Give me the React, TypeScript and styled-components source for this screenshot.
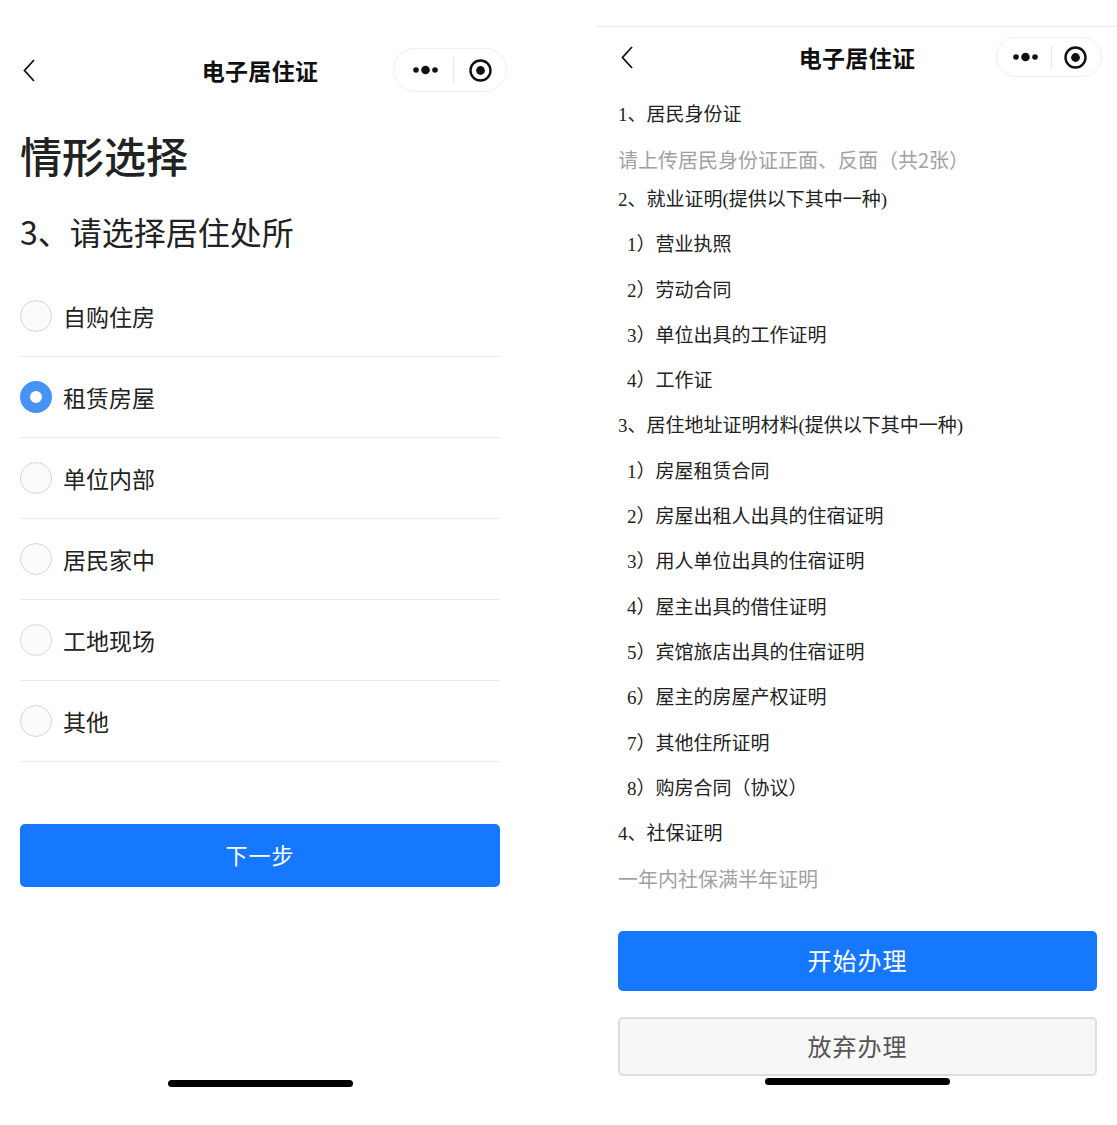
import React from 'react';
import styled, { createGlobalStyle } from 'styled-components';

const SANS = '"Noto Sans CJK SC", "Noto Sans", sans-serif';
const SERIF = '"Liberation Serif", "Noto Sans CJK SC", serif';

const GlobalStyle = createGlobalStyle`
  html, body {
    margin: 0;
    padding: 0;
    background: #fff;
  }
  body {
    font-family: ${SANS};
    color: #222;
  }
  * {
    box-sizing: border-box;
  }
`;

const options = ['自购住房', '租赁房屋', '单位内部', '居民家中', '工地现场', '其他'];

type Line = { kind: 'head' | 'item' | 'note'; text: string };

const docs: Line[] = [
  { kind: 'head', text: '1、居民身份证' },
  { kind: 'note', text: '请上传居民身份证正面、反面（共2张）' },
  { kind: 'head', text: '2、就业证明(提供以下其中一种)' },
  { kind: 'item', text: '1）营业执照' },
  { kind: 'item', text: '2）劳动合同' },
  { kind: 'item', text: '3）单位出具的工作证明' },
  { kind: 'item', text: '4）工作证' },
  { kind: 'head', text: '3、居住地址证明材料(提供以下其中一种)' },
  { kind: 'item', text: '1）房屋租赁合同' },
  { kind: 'item', text: '2）房屋出租人出具的住宿证明' },
  { kind: 'item', text: '3）用人单位出具的住宿证明' },
  { kind: 'item', text: '4）屋主出具的借住证明' },
  { kind: 'item', text: '5）宾馆旅店出具的住宿证明' },
  { kind: 'item', text: '6）屋主的房屋产权证明' },
  { kind: 'item', text: '7）其他住所证明' },
  { kind: 'item', text: '8）购房合同（协议）' },
  { kind: 'head', text: '4、社保证明' },
  { kind: 'note', text: '一年内社保满半年证明' },
];

type NavProps = {
  top?: boolean;
  capsuleWidth: number;
  capsuleHeight: number;
};

const NavHeader = ({ top, capsuleWidth, capsuleHeight }: NavProps) => (
  <NavBar $top={top}>
    <BackButton>
      <svg width="12" height="23" viewBox="0 0 12 23">
        <polyline points="11,1 1.5,11.5 11,22" fill="none" stroke="#111" strokeWidth="1.8" />
      </svg>
    </BackButton>
    <NavTitle>电子居住证</NavTitle>
    <Capsule $w={capsuleWidth} $h={capsuleHeight}>
      <svg width="25" height="10" viewBox="0 0 25 10">
        <circle cx="3" cy="5" r="2.8" fill="#111" />
        <circle cx="12.5" cy="5" r="4.3" fill="#111" />
        <circle cx="22" cy="5" r="2.8" fill="#111" />
      </svg>
      <CapsuleDivider />
      <svg width="23" height="23" viewBox="0 0 23 23">
        <circle cx="11.5" cy="11.5" r="10" fill="none" stroke="#111" strokeWidth="2.4" />
        <circle cx="11.5" cy="11.5" r="4.4" fill="#111" />
      </svg>
    </Capsule>
  </NavBar>
);

const App = () => {
  const selected = 1;
  return (
    <Page>
      <GlobalStyle />
      <Screen $left>
        <NavHeader capsuleWidth={114} capsuleHeight={44} />
        <LeftBody>
          <PageTitle>情形选择</PageTitle>
          <Question>3、请选择居住处所</Question>
          <OptionList>
            {options.map((o, i) => (
              <OptionRow key={o}>
                <Radio $checked={i === selected} />
                <OptionText>{o}</OptionText>
              </OptionRow>
            ))}
          </OptionList>
          <PrimaryButton $h={63} $size={22} $top={62}>
            下一步
          </PrimaryButton>
        </LeftBody>
        <HomeBar $auto />
      </Screen>

      <Screen>
        <NavHeader top capsuleWidth={106} capsuleHeight={40} />
        <RightBody>
          <DocList>
            {docs.map((d, i) => (
              <DocLine key={i} $kind={d.kind}>
                {d.text}
              </DocLine>
            ))}
          </DocList>
          <PrimaryButton $h={60} $size={24} $top={35}>
            开始办理
          </PrimaryButton>
          <GhostButton>放弃办理</GhostButton>
        </RightBody>
        <HomeBar />
      </Screen>
    </Page>
  );
};

const Page = styled.div`
  display: flex;
  gap: 77px;
  width: 1117px;
  height: 1125px;
  overflow: hidden;
`;

const Screen = styled.div<{ $left?: boolean }>`
  width: 520px;
  height: 1125px;
  display: flex;
  flex-direction: column;
  padding-top: ${(p) => (p.$left ? '48px' : '26px')};
`;

const NavBar = styled.div<{ $top?: boolean }>`
  display: grid;
  grid-template-columns: 1fr auto 1fr;
  align-items: center;
  height: ${(p) => (p.$top ? '61px' : '44px')};
  padding: ${(p) => (p.$top ? '0 15px' : '0 13px')};
  border-top: ${(p) => (p.$top ? '1px solid #ededed' : 'none')};

  & > div:first-child {
    margin-left: ${(p) => (p.$top ? '9px' : '10px')};
  }
`;

const BackButton = styled.div`
  display: flex;
  align-items: center;
  justify-self: start;
`;

const NavTitle = styled.div`
  font-family: ${SANS};
  font-size: 23px;
  font-weight: 700;
  color: #111;
  letter-spacing: 0.3px;
`;

const Capsule = styled.div<{ $w: number; $h: number }>`
  justify-self: end;
  width: ${(p) => p.$w}px;
  height: ${(p) => p.$h}px;
  border-radius: ${(p) => p.$h / 2}px;
  border: 1px solid #efefef;
  background: #fff;
  display: flex;
  align-items: center;
  justify-content: space-between;
  padding: 0 14px 0 ${(p) => (p.$w > 110 ? 19 : 16)}px;
`;

const CapsuleDivider = styled.div`
  width: 1px;
  height: 24px;
  background: #e6e6e6;
`;

const LeftBody = styled.div`
  display: flex;
  flex-direction: column;
  padding: 0 20px;
`;

const PageTitle = styled.h1`
  margin: 38px 0 0;
  font-family: ${SANS};
  font-size: 42px;
  line-height: 50px;
  font-weight: 500;
  color: #222;
`;

const Question = styled.h2`
  margin: 31px 0 0;
  font-family: ${SANS};
  font-size: 32px;
  line-height: 40px;
  font-weight: 400;
  color: #222;
`;

const OptionList = styled.div`
  margin-top: 25px;
  display: flex;
  flex-direction: column;
`;

const OptionRow = styled.div`
  display: flex;
  align-items: center;
  gap: 11px;
  height: 81px;
  border-bottom: 1px solid #ebebeb;
`;

const Radio = styled.span<{ $checked?: boolean }>`
  width: 32px;
  height: 32px;
  border-radius: 50%;
  flex-shrink: 0;
  border: ${(p) => (p.$checked ? '10px solid #4593f2' : '1.5px solid #d6d6d6')};
  background: ${(p) => (p.$checked ? '#fff' : '#fbfbfb')};
`;

const OptionText = styled.span`
  font-family: ${SANS};
  font-size: 23px;
  color: #222;
`;

const PrimaryButton = styled.button<{ $h: number; $size: number; $top: number }>`
  margin-top: ${(p) => p.$top}px;
  height: ${(p) => p.$h}px;
  width: 100%;
  border: none;
  border-radius: 5px;
  background: #1677ff;
  color: #fff;
  font-family: ${SANS};
  font-size: ${(p) => p.$size}px;
  font-weight: 400;
  letter-spacing: 1px;
  padding: 0 0 3px;
`;

const GhostButton = styled.button`
  margin-top: 26px;
  height: 59px;
  width: 100%;
  border: 2px solid #dedede;
  border-radius: 5px;
  background: #f7f7f7;
  color: #555;
  font-family: ${SANS};
  font-size: 24px;
  font-weight: 400;
  letter-spacing: 1px;
  padding: 0 0 3px;
`;

const RightBody = styled.div`
  display: flex;
  flex-direction: column;
  padding: 0 20px 0 21px;
`;

const DocList = styled.div`
  padding-top: 5px;
  display: flex;
  flex-direction: column;
`;

const DocLine = styled.div<{ $kind: 'head' | 'item' | 'note' }>`
  font-family: ${(p) => (p.$kind === 'note' ? SANS : SERIF)};
  font-size: ${(p) => (p.$kind === 'note' ? '20px' : '19px')};
  color: ${(p) => (p.$kind === 'note' ? '#a2a2a2' : '#222')};
  padding-left: ${(p) => (p.$kind === 'item' ? '9px' : '0')};
  padding-top: ${(p) => (p.$kind === 'note' ? '7px' : '0')};
  line-height: ${(p) => (p.$kind === 'note' ? '32.7px' : '45.3px')};
  white-space: nowrap;
`;

const HomeBar = styled.div<{ $auto?: boolean }>`
  align-self: center;
  width: 185px;
  height: 7px;
  border-radius: 4px;
  background: #000;
  margin-top: ${(p) => (p.$auto ? 'auto' : '2px')};
  margin-bottom: ${(p) => (p.$auto ? '38px' : '0')};
`;

export default App;
